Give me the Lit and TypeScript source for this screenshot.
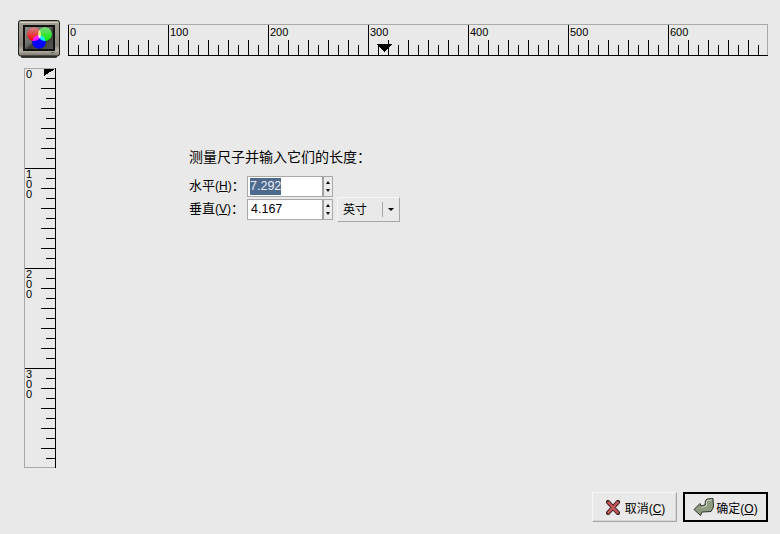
import { LitElement, html, css, svg } from "lit";
import { customElement } from "lit/decorators.js";

const range = (n: number) => Array.from({ length: n }, (_, i) => i);

@customElement("app-root")
export class AppRoot extends LitElement {
  static styles = css`
    :host {
      display: block;
      width: 780px;
      height: 534px;
      overflow: hidden;
      background: #e9e9e9;
      color: #000;
      font-family: "Liberation Sans", "Noto Sans CJK SC", sans-serif;
      font-size: 12px;
    }
    .page { padding: 20px 12px 0 18px; display: flex; flex-direction: column; }
    .top { display: flex; align-items: flex-start; gap: 8px; height: 38px; }
    .monitor { display: block; width: 42px; height: 38px; flex: none; }
    .screen-blend { mix-blend-mode: screen; }
    .ruler { display: block; shape-rendering: crispEdges; }
    .ruler text { font-family: "Liberation Sans", sans-serif; font-size: 11px; fill: #000; shape-rendering: auto; }
    .hruler { margin-top: 4px; }
    .body { display: flex; margin-top: 10px; height: 400px; }
    .vwrap { position: relative; margin-left: 6px; flex: none; width: 32px; height: 400px; }
    .vlabel {
      position: absolute; left: 2px; width: 7px;
      font-family: "Liberation Sans", sans-serif; font-size: 11px; line-height: 10px;
    }
    .vlabel div { height: 10px; overflow: hidden; }
    .main { padding: 82px 0 0 134px; }
    .title { font-size: 14px; line-height: 15px; height: 15px; margin-bottom: 11px; white-space: nowrap; margin-left: -1px; }
    .grid { display: grid; grid-template-columns: 57px auto auto; grid-auto-rows: 21px; row-gap: 2px; justify-content: start; align-items: center; }
    .label { font-size: 13px; white-space: nowrap; line-height: 15px; padding-bottom: 2px; margin-left: -1px; }
    .label .latin { font-family: "Liberation Sans", sans-serif; font-size: 12px; }
    .label u, .btn u { text-decoration: underline; }
    .spin { display: flex; height: 21px; width: 86px; }
    .entry {
      box-sizing: border-box; width: 77px; height: 21px;
      background: #fff; border: 1px solid #a9a9a9; border-right: 2px solid #a0a0a0;
      font-family: "Liberation Sans", sans-serif; font-size: 12.5px; line-height: 19px; padding-left: 2px;
    }
    .sel { background: #4e6a8e; color: #e9eef5; display: inline-block; height: 17px; line-height: 17px; vertical-align: top; margin-top: 1px; }
    .val { display: inline-block; padding-left: 1px; }
    .arrows {
      box-sizing: border-box; width: 9px; height: 21px;
      border: 1px solid #a9a9a9; border-left: none; background: #ebebeb;
      display: flex; flex-direction: column; align-items: center; justify-content: center; gap: 5px;
    }
    .up { width: 0; height: 0; border: 2px solid transparent; border-top: none; border-bottom: 3px solid #000; }
    .down { width: 0; height: 0; border: 2px solid transparent; border-bottom: none; border-top: 3px solid #000; }
    .combo {
      box-sizing: border-box; width: 63px; height: 25px; margin: -2px 0 -2px 4px;
      display: flex; align-items: center;
      border: 1px solid; border-color: #f6f6f6 #a6a6a6 #a6a6a6 #f6f6f6;
      background: #e9e9e9; font-size: 12px;
      align-self: center;
    }
    .combo .txt { width: 44px; padding: 0 0 2px 5px; box-sizing: border-box; }
    .combo .sep { width: 1px; height: 15px; background: #a6a6a6; }
    .combo .tri { margin-left: 5px; width: 0; height: 0; border: 3.5px solid transparent; border-bottom: none; border-top: 3px solid #000; }
    .actions { display: flex; justify-content: flex-end; gap: 6px; margin-top: 24px; }
    .btn {
      box-sizing: border-box; width: 85px; height: 30px;
      display: flex; align-items: center; justify-content: center; gap: 5px;
      background: #e9e9e9; border: 1px solid;
      border-color: #f6f6f6 #a6a6a6 #a6a6a6 #f6f6f6;
      font-size: 12px; white-space: nowrap; padding-left: 2px;
      box-shadow: inset -1px -1px 0 #d6d6d6;
    }
    .btn.def { border: 2px solid #000; box-shadow: none; gap: 2px; padding-left: 0; }
    .btn svg { display: block; flex: none; }
    .latin { font-family: "Liberation Sans", sans-serif; }
  `;

  private hruler() {
    return html`<svg class="ruler hruler" width="700" height="32" viewBox="0 0 700 32">
      <rect x="0" y="0" width="700" height="1" fill="#a9a9a9"></rect>
      <rect x="699" y="0" width="1" height="31" fill="#a9a9a9"></rect>
      <rect x="0" y="31" width="700" height="1" fill="#000"></rect>
      ${range(70).map((i) => {
        const x = i * 10;
        const y = i % 10 === 0 ? 1 : i % 2 === 0 ? 16 : 21;
        return svg`<rect x=${x} y=${y} width="1" height=${31 - y} fill="#000"></rect>`;
      })}
      ${range(7).map((i) => svg`<text x=${i * 100 + 2} y="12">${i * 100}</text>`)}
      <polygon points="309,20 324,20 316.5,28" fill="#000"></polygon>
    </svg>`;
  }

  private vruler() {
    return html`<div class="vwrap">
      <svg class="ruler" width="32" height="400" viewBox="0 0 32 400">
        <rect x="0" y="0" width="32" height="1" fill="#a9a9a9"></rect>
        <rect x="0" y="0" width="1" height="400" fill="#a9a9a9"></rect>
        <rect x="0" y="399" width="32" height="1" fill="#a9a9a9"></rect>
        <rect x="31" y="0" width="1" height="400" fill="#000"></rect>
        ${range(40).map((i) => {
          const y = i * 10;
          const x = i % 10 === 0 ? 1 : i % 2 === 0 ? 17 : 22;
          return i === 0 ? "" : svg`<rect x=${x} y=${y} width=${31 - x} height="1" fill="#000"></rect>`;
        })}
        <polygon points="20,1 31,1 20,8" fill="#000"></polygon>
      </svg>
      ${range(4).map(
        (i) => html`<div class="vlabel" style="top:${i * 100 + 1}px">
          ${String(i * 100).split("").map((d) => html`<div>${d}</div>`)}
        </div>`
      )}
    </div>`;
  }

  private monitor() {
    return html`<svg class="monitor" viewBox="0 0 42 38">
      <defs>
        <linearGradient id="case" x1="0" y1="0" x2="0" y2="1">
          <stop offset="0" stop-color="#a39f94"></stop>
          <stop offset="0.7" stop-color="#8b877c"></stop>
          <stop offset="0.85" stop-color="#b5b1a6"></stop>
          <stop offset="1" stop-color="#77736a"></stop>
        </linearGradient>
        <linearGradient id="glass" x1="0" y1="0" x2="1" y2="1">
          <stop offset="0" stop-color="#8f8f8b"></stop>
          <stop offset="0.45" stop-color="#6c6c68"></stop>
          <stop offset="0.55" stop-color="#3a3a38"></stop>
          <stop offset="1" stop-color="#565653"></stop>
        </linearGradient>
        <linearGradient id="red" x1="0" y1="0" x2="0" y2="1">
          <stop offset="0" stop-color="#c88"></stop>
          <stop offset="1" stop-color="#f00"></stop>
        </linearGradient>
        <linearGradient id="green" x1="0" y1="0" x2="0" y2="1">
          <stop offset="0" stop-color="#7fd87f"></stop>
          <stop offset="1" stop-color="#0e0"></stop>
        </linearGradient>
      </defs>
      <rect x="3" y="35" width="36" height="3" rx="1" fill="#3d3b36"></rect>
      <rect x="0.5" y="0.5" width="41" height="35.5" rx="2" fill="url(#case)" stroke="#1d1d1b"></rect>
      <rect x="2" y="2" width="38" height="1" fill="#cfccc2"></rect>
      <rect x="5" y="5" width="32" height="26" fill="#111"></rect>
      <g style="isolation:isolate">
        <rect x="7" y="7" width="28" height="22" fill="url(#glass)"></rect>
        <circle cx="16" cy="14" r="7" fill="#000"></circle>
        <circle cx="27" cy="14" r="7" fill="#000"></circle>
        <circle cx="21" cy="22" r="6.8" fill="#000"></circle>
        <circle class="screen-blend" cx="16" cy="14" r="7" fill="url(#red)"></circle>
        <circle class="screen-blend" cx="27" cy="14" r="7" fill="url(#green)"></circle>
        <circle class="screen-blend" cx="21" cy="22" r="6.8" fill="#00f"></circle>
      </g>
      <rect x="33" y="32" width="3" height="1" fill="#5a574f"></rect>
    </svg>`;
  }

  private xIcon() {
    return html`<svg width="14" height="15" viewBox="0 0 14 15">
      <path d="M2 2 L12 13 M12 2 L2 13" stroke="#3c2222" stroke-width="4.2" stroke-linecap="round" fill="none"></path>
      <path d="M2.4 2.4 L11.6 12.6 M11.6 2.4 L2.4 12.6" stroke="#c4565c" stroke-width="2.4" stroke-linecap="round" fill="none"></path>
    </svg>`;
  }

  private okIcon() {
    return html`<svg width="21" height="19" viewBox="0 0 21 19">
      <path d="M1 11.5 L7 5.5 L8 8 L12 7 L12.5 2.5 L14 1 L20 0.5 L20.5 9 L18 13.5 L9 14 L7.5 17.5 Z" fill="#8f9c82" stroke="#2c3228" stroke-width="1" stroke-linejoin="round"></path>
      <path d="M14 2.5 L19 2 M13.5 3 L13.5 8 L8.5 9.5" stroke="#c6d0bb" stroke-width="1" fill="none"></path>
    </svg>`;
  }

  render() {
    return html`<div class="page">
      <div class="top">${this.monitor()}${this.hruler()}</div>
      <div class="body">
        ${this.vruler()}
        <div class="main">
          <div class="title">测量尺子并输入它们的长度：</div>
          <div class="grid">
            <div class="label">水平<span class="latin">(<u>H</u>)</span>：</div>
            <div class="spin">
              <div class="entry"><span class="sel">7.292</span></div>
              <div class="arrows"><i class="up"></i><i class="down"></i></div>
            </div>
            <div></div>
            <div class="label">垂直<span class="latin">(<u>V</u>)</span>：</div>
            <div class="spin">
              <div class="entry"><span class="val">4.167</span></div>
              <div class="arrows"><i class="up"></i><i class="down"></i></div>
            </div>
            <div class="combo"><span class="txt">英寸</span><span class="sep"></span><i class="tri"></i></div>
          </div>
        </div>
      </div>
      <div class="actions">
        <div class="btn">${this.xIcon()}<span>取消<span class="latin">(<u>C</u>)</span></span></div>
        <div class="btn def">${this.okIcon()}<span>确定<span class="latin">(<u>O</u>)</span></span></div>
      </div>
    </div>`;
  }
}
